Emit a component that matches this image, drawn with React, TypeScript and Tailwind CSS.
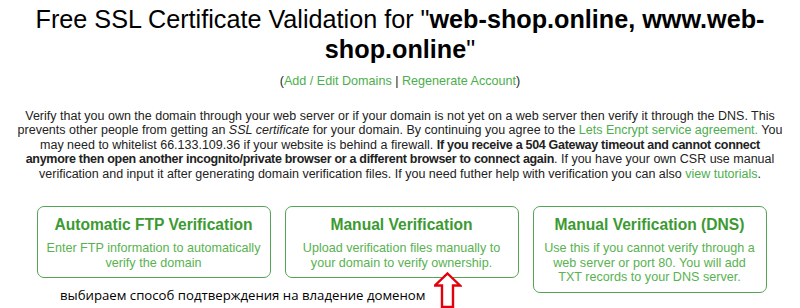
import React from 'react';

const cards = [
  {
    title: 'Automatic FTP Verification',
    body: 'Enter FTP information to automatically verify the domain',
  },
  {
    title: 'Manual Verification',
    body: 'Upload verification files manually to your domain to verify ownership.',
  },
  {
    title: 'Manual Verification (DNS)',
    body: 'Use this if you cannot verify through a web server or port 80. You will add TXT records to your DNS server.',
  },
];

function UpArrow() {
  return (
    <svg width="28" height="36" viewBox="0 0 28 36" fill="white">
      <path
        d="M13.5 1.5 L26 13.5 L19 13.5 L19 35 L8 35 L8 13.5 L1 13.5 Z"
        stroke="#e3000b"
        strokeWidth={2.4}
        strokeLinejoin="miter"
      />
    </svg>
  );
}

export default function App() {
  return (
    <div
      className="relative w-[800px] h-[308px] overflow-hidden bg-white text-center text-[#222]"
      style={{ fontFamily: '"Liberation Sans", Arial, sans-serif' }}
    >
      {/* Heading */}
      <h1 className="mx-auto w-[770px] pt-[4px] text-[25.2px] leading-[30px] font-normal text-black">
        Free SSL Certificate Validation for "<b>web-shop.online, www.web-shop.online</b>"
      </h1>

      <p className="mt-[10px] text-[12.6px] leading-[14.5px]">
        (<a className="text-[#4cae4c]">Add / Edit Domains</a> |{' '}
        <a className="text-[#4cae4c]">Regenerate Account</a>)
      </p>

      <p className="mt-[20px] text-[12.5px] leading-[14.5px]">
        Verify that you own the domain through your web server or if your domain is not yet on a web
        server then verify it through the DNS. This
        <br />
        prevents other people from getting an <i>SSL certificate</i> for your domain. By continuing
        you agree to the <a className="text-[#4cae4c]">Lets Encrypt service agreement.</a> You
        <br />
        may need to whitelist 66.133.109.36 if your website is behind a firewall.{' '}
        <b className="tracking-[-0.3px]">
          If you receive a 504 Gateway timeout and cannot connect
          <br />
          anymore then open another incognito/private browser or a different browser to connect again
        </b>
        . If you have your own CSR use manual
        <br />
        verification and input it after generating domain verification files. If you need futher
        help with verification you can also <a className="text-[#4cae4c]">view tutorials</a>.
      </p>

      {/* Verification options */}
      <div className="mt-[25px] flex items-start justify-center gap-[14px] pl-[3px]">
        {cards.map((card) => (
          <div
            key={card.title}
            className="w-[234px] rounded-[7px] border border-[#55a355] px-[8px] pt-[9px] pb-[7px]"
          >
            <div className="text-[15.6px] leading-[18px] font-bold text-[#3c9a32]">{card.title}</div>
            <div className="mt-[7px] text-[12.6px] leading-[14.5px] text-[#58b250]">{card.body}</div>
          </div>
        ))}
      </div>

      {/* Annotation */}
      <div
        className="absolute left-[60px] top-[286px] text-[13.2px] leading-[18px] text-black"
        style={{ fontFamily: '"Open Sans", "Noto Sans", sans-serif' }}
      >
        выбираем способ подтверждения на владение доменом
      </div>
      <div className="absolute left-[434px] top-[272px]">
        <UpArrow />
      </div>
    </div>
  );
}
